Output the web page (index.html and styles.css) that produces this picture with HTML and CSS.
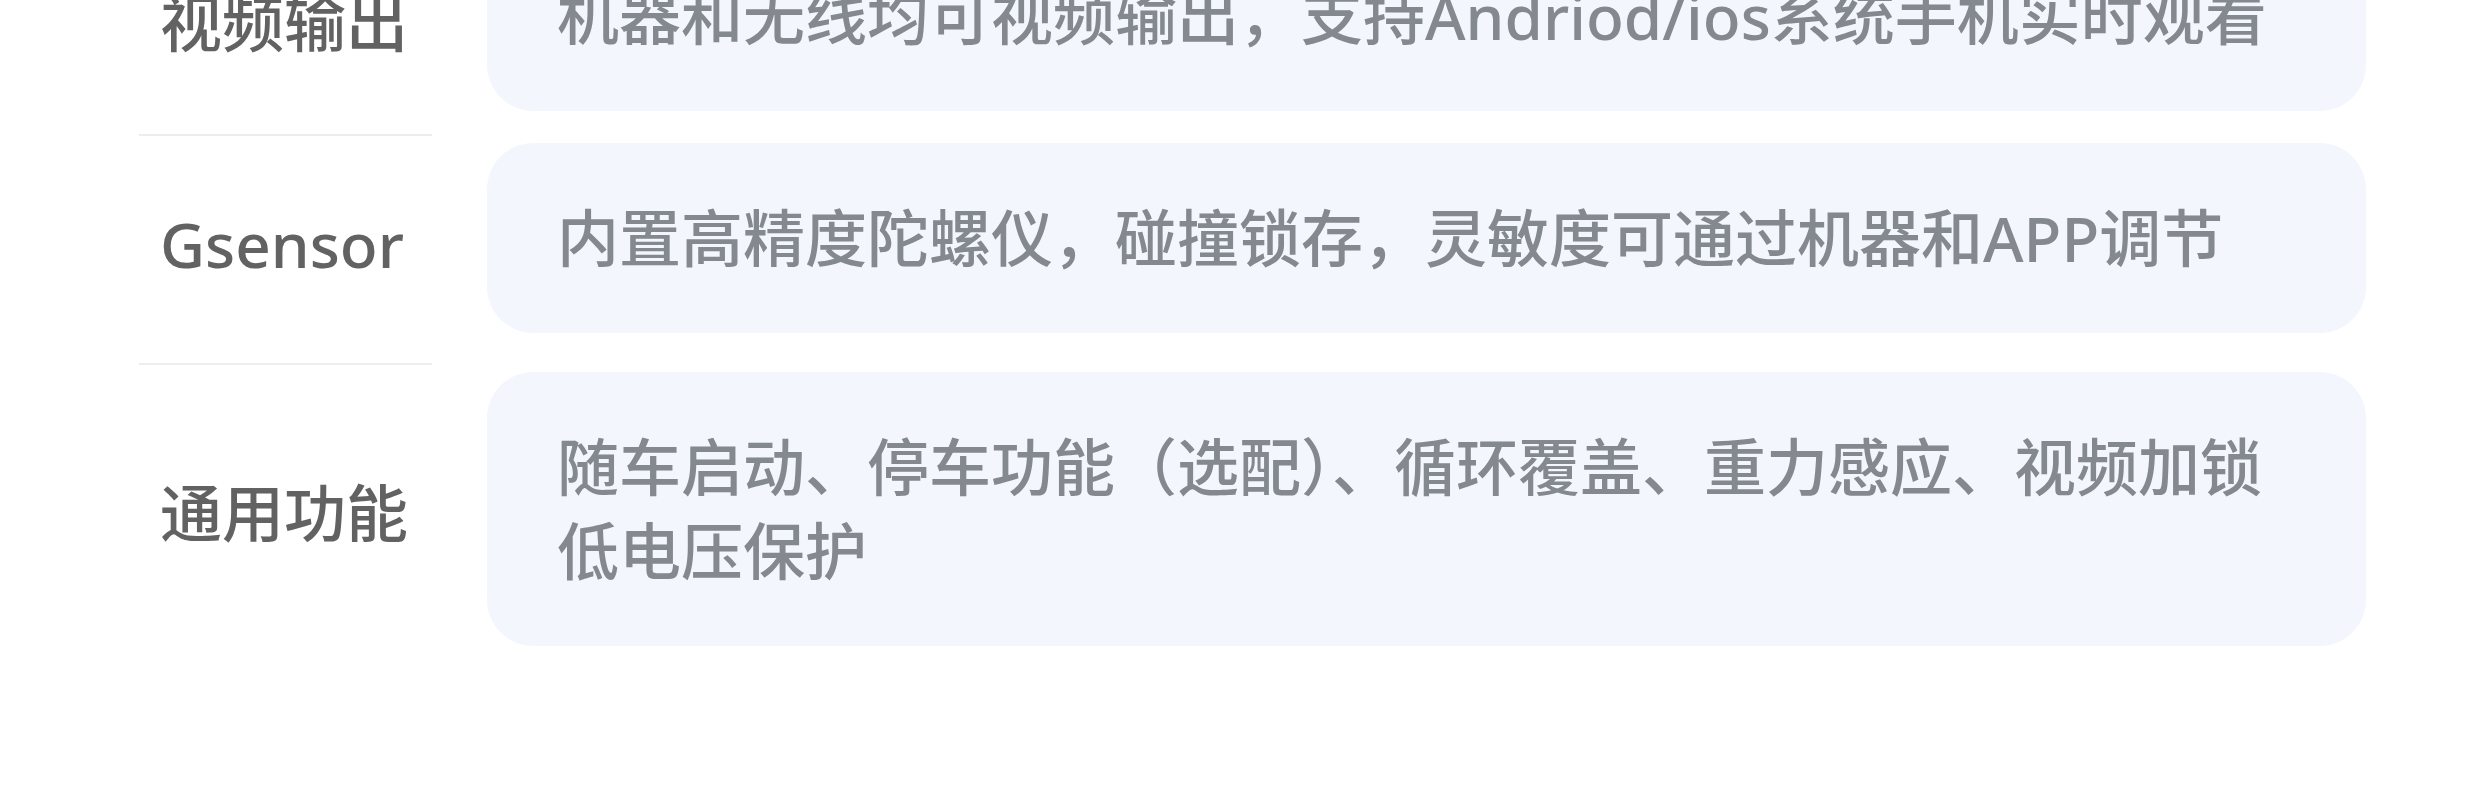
FILE: index.html
```html
<!DOCTYPE html>
<html lang="zh-CN">
<head>
<meta charset="utf-8">
<title>功能参数</title>
<link rel="stylesheet" href="styles.css">
</head>
<body>
<div class="spec">
  <div class="row row-first">
    <div class="label">视频输出</div>
    <div class="card">机器和无线均可视频输出，支持Andriod/ios系统手机实时观看</div>
  </div>
  <div class="row">
    <div class="label">Gsensor</div>
    <div class="card">内置高精度陀螺仪，碰撞锁存，灵敏度可通过机器和APP调节</div>
  </div>
  <div class="row row-last">
    <div class="label">通用功能</div>
    <div class="card">随车启动、停车功能（选配）、循环覆盖、重力感应、视频加锁<br>低电压保护</div>
  </div>
</div>
</body>
</html>
```

FILE: styles.css
```css
html, body {
  margin: 0;
  padding: 0;
  background: #ffffff;
}

body {
  font-family: "Noto Sans", "Noto Sans CJK SC", sans-serif;
  overflow: hidden;
}

.spec {
  display: flex;
  flex-direction: column;
  margin-top: -86px;
  padding-left: 139px;
}

.row {
  display: grid;
  grid-template-columns: 293px 1879px;
  column-gap: 55px;
  align-items: stretch;
}

.label {
  display: flex;
  align-items: center;
  padding-left: 21px;
  padding-bottom: 12px;
  border-bottom: 2px solid #ededed;
  font-size: 62px;
  font-weight: 500;
  color: #626262;
  white-space: nowrap;
}

.row-first .label {
  padding-bottom: 8px;
}

.row-last .label {
  border-bottom: none;
  padding-bottom: 24px;
}

.card {
  margin: 7px 0 32px;
  padding: 53px 70px;
  background: #f3f7fd;
  border-radius: 46px;
  font-size: 62px;
  font-weight: 500;
  line-height: 84px;
  color: #84888f;
  white-space: nowrap;
}

.row-first .card {
  margin-bottom: 25px;
}
```
